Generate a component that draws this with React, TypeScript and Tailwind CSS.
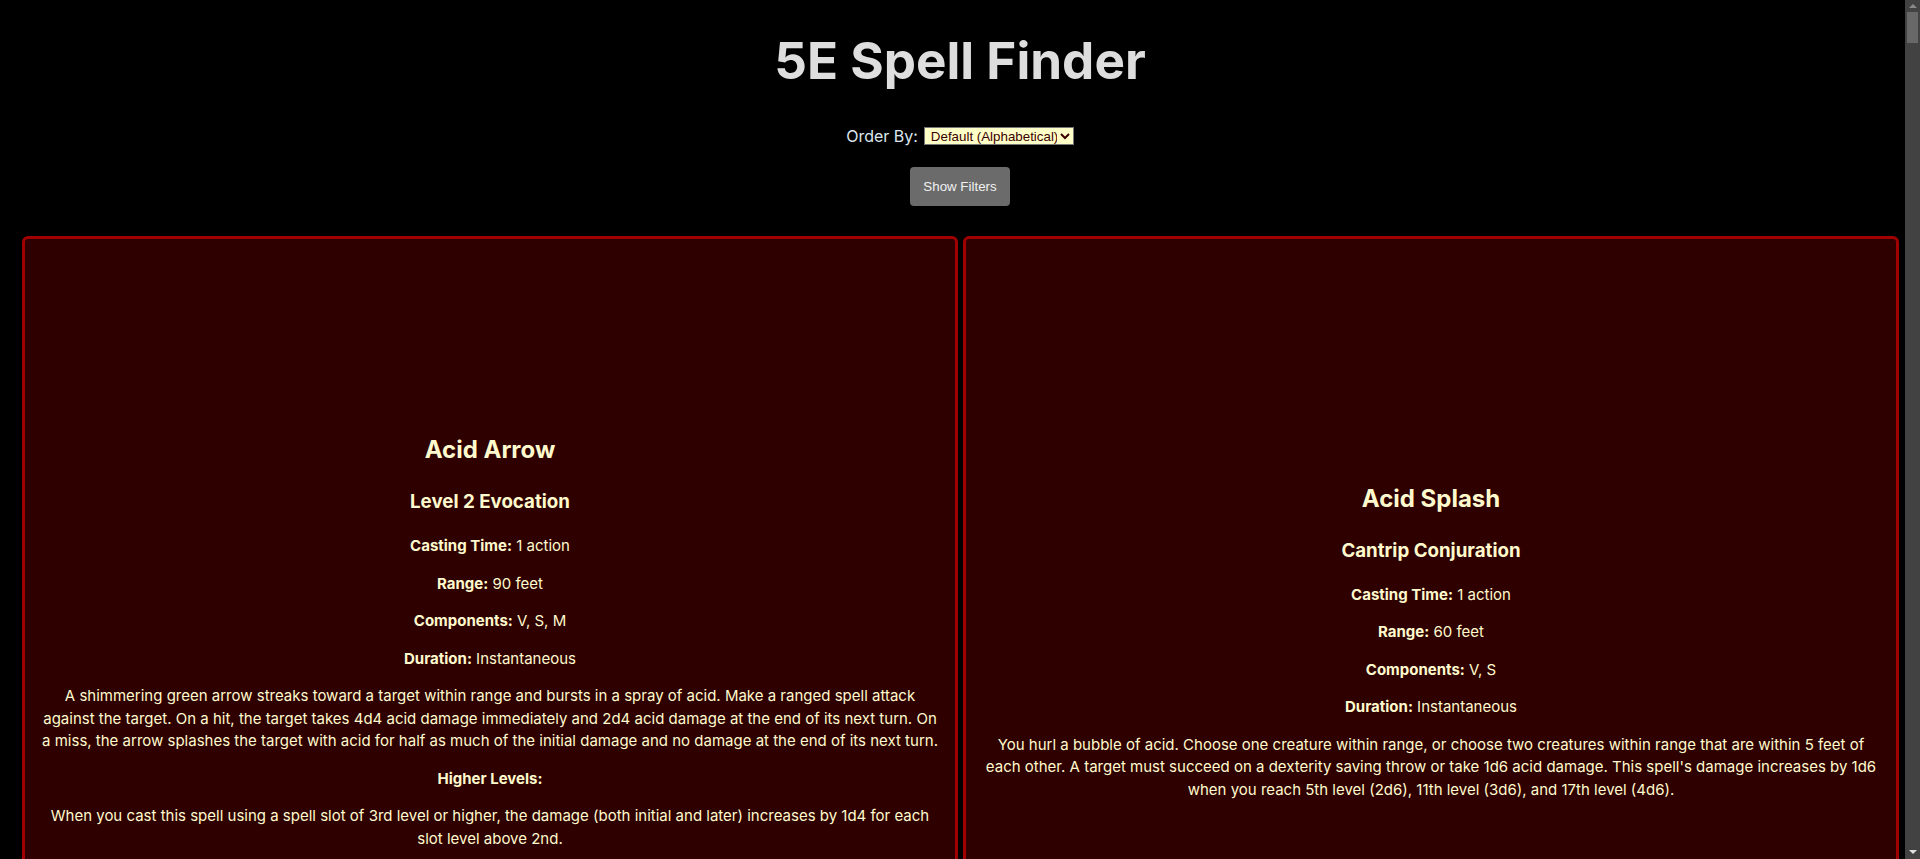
import { useEffect } from "react";

type Spell = {
  name: string;
  level: string;
  castingTime: string;
  range: string;
  components: string;
  duration: string;
  desc: string[];
  higher?: string;
};

const spells: Spell[] = [
  {
    name: "Acid Arrow",
    level: "Level 2 Evocation",
    castingTime: "1 action",
    range: "90 feet",
    components: "V, S, M",
    duration: "Instantaneous",
    desc: [
      "A shimmering green arrow streaks toward a target within range and bursts in a spray of acid. Make a ranged spell attack against the target. On a hit, the target takes 4d4 acid damage immediately and 2d4 acid damage at the end of its next turn. On a miss, the arrow splashes the target with acid for half as much of the initial damage and no damage at the end of its next turn.",
    ],
    higher:
      "When you cast this spell using a spell slot of 3rd level or higher, the damage (both initial and later) increases by 1d4 for each slot level above 2nd.",
  },
  {
    name: "Acid Splash",
    level: "Cantrip Conjuration",
    castingTime: "1 action",
    range: "60 feet",
    components: "V, S",
    duration: "Instantaneous",
    desc: [
      "You hurl a bubble of acid. Choose one creature within range, or choose two creatures within range that are within 5 feet of each other. A target must succeed on a dexterity saving throw or take 1d6 acid damage. This spell's damage increases by 1d6 when you reach 5th level (2d6), 11th level (3d6), and 17th level (4d6).",
    ],
  },
  {
    name: "Aid",
    level: "Level 2 Abjuration",
    castingTime: "1 action",
    range: "30 feet",
    components: "V, S, M",
    duration: "8 hours",
    desc: [
      "Your spell bolsters your allies with toughness and resolve. Choose up to three creatures within range. Each target's hit point maximum and current hit points increase by 5 for the duration.",
    ],
    higher:
      "When you cast this spell using a spell slot of 3rd level or higher, a target's hit points increase by an additional 5 for each slot level above 2nd.",
  },
  {
    name: "Alarm",
    level: "Level 1 Abjuration",
    castingTime: "1 minute",
    range: "30 feet",
    components: "V, S, M",
    duration: "8 hours",
    desc: [
      "You set an alarm against unwanted intrusion. Choose a door, a window, or an area within range that is no larger than a 20-foot cube. Until the spell ends, an alarm alerts you whenever a Tiny or larger creature touches or enters the warded area.",
    ],
  },
];

function SpellCard({ spell }: { spell: Spell }) {
  return (
    <div className="h-[805px] rounded-[6px] border-[3px] border-[#a00000] bg-[#2e0000] px-[14px] flex items-center text-center text-[#fffacd]">
      <div className="w-full">
        <h2 className="my-[19.92px] text-[24px] leading-[36px] font-bold">{spell.name}</h2>
        <h3 className="my-[18.72px] text-[18.72px] leading-[28px] font-bold">{spell.level}</h3>
        <p className="my-[15px] text-[15px] leading-[22.5px]">
          <strong className="font-bold">Casting Time:</strong> {spell.castingTime}
        </p>
        <p className="my-[15px] text-[15px] leading-[22.5px]">
          <strong className="font-bold">Range:</strong> {spell.range}
        </p>
        <p className="my-[15px] text-[15px] leading-[22.5px]">
          <strong className="font-bold">Components:</strong> {spell.components}
        </p>
        <p className="my-[15px] text-[15px] leading-[22.5px]">
          <strong className="font-bold">Duration:</strong> {spell.duration}
        </p>
        {spell.desc.map((d, i) => (
          <p key={i} className="my-[15px] text-[15px] leading-[22.5px]">
            {d}
          </p>
        ))}
        {spell.higher && (
          <>
            <p className="my-[15px] text-[15px] leading-[22.5px] font-bold">Higher Levels:</p>
            <p className="my-[15px] text-[15px] leading-[22.5px]">{spell.higher}</p>
          </>
        )}
      </div>
    </div>
  );
}

export default function App() {
  useEffect(() => {
    document.documentElement.classList.add("scheme-dark", "bg-black");
  }, []);

  return (
    <div className="min-h-screen overflow-x-hidden bg-black font-['Inter',sans-serif] leading-normal text-[#dedede]">
      <div className="w-screen pb-10">
        {/* HEADER */}
        <header className="flex flex-col items-center pt-[32px]">
          <h1 className="text-[51.2px] leading-[1.1] font-bold">5E Spell Finder</h1>
          <div className="mt-[36px] flex h-[24px] items-center text-base text-[#dde6ee]">
            <label htmlFor="order">Order By:</label>
            <select
              id="order"
              className="ml-[6px] h-[18px] w-[150px] border border-[#767676] bg-[#ffffc8] pl-[2px] font-['Liberation_Sans',Arial,sans-serif] text-[13.33px] text-[#3a0000] scheme-light"
            >
              <option>Default (Alphabetical)</option>
              <option>Level</option>
              <option>School</option>
            </select>
          </div>
          <button className="mt-[19px] h-[39px] w-[100px] rounded-[4px] bg-[#6b6b6b] font-['Liberation_Sans',Arial,sans-serif] text-[13.33px] text-[#f0f0f0]">
            Show Filters
          </button>
        </header>

        {/* SPELL CARDS */}
        <div className="mt-[30px] grid grid-cols-2 gap-[5px] pl-[22px] pr-[21px]">
          {spells.map((s) => (
            <SpellCard key={s.name} spell={s} />
          ))}
        </div>
      </div>

      {/* SCROLLBAR LOOK */}
      <div aria-hidden className="fixed right-0 top-0 flex h-screen w-[15px] flex-col items-center bg-[#424242]">
        <div className="flex h-[12px] items-center justify-center">
          <div className="h-0 w-0 border-x-[4px] border-b-[4px] border-x-transparent border-b-[#8a8a8a]" />
        </div>
        <div className="h-[31px] w-[11px] bg-[#686868]" />
        <div className="flex-1" />
        <div className="flex h-[14px] items-center justify-center">
          <div className="h-0 w-0 border-x-[4px] border-t-[4px] border-x-transparent border-t-[#e0e0e0]" />
        </div>
      </div>
    </div>
  );
}
